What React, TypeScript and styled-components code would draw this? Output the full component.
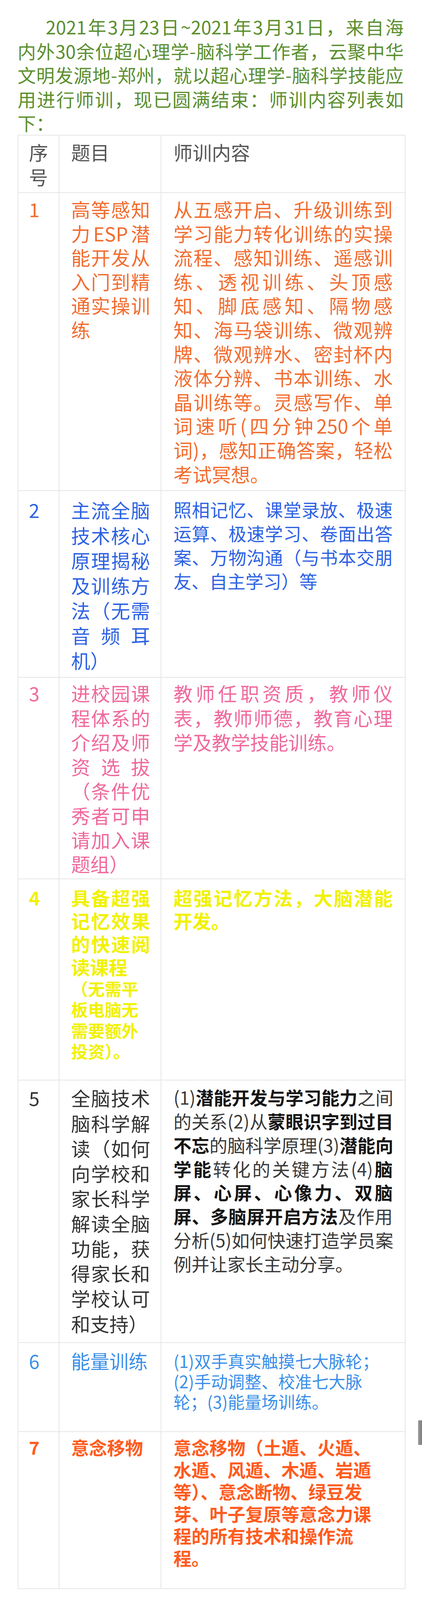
import React from 'react';
import styled, { createGlobalStyle } from 'styled-components';

/* The frame that is photographed is 4096px tall while the reference is 4855px:
   every vertical measure taken from the reference is mapped with K. */
const K = 4096 / 4855;
const vy = (n: number) => `${(n * K).toFixed(2)}px`;

const GlobalStyle = createGlobalStyle`
  html, body { margin: 0; padding: 0; background: #ffffff; }
  body { font-family: "Noto Sans CJK SC", "Noto Sans", sans-serif; }
`;

const Page = styled.main`
  position: relative;
  width: 1080px;
  box-sizing: border-box;
  padding: ${vy(44)} 44px ${vy(30)} 45px;
  background: #ffffff;
`;

const Intro = styled.section`
  width: 988px;
  color: #5b8f2f;
  font-size: 47px;
  line-height: ${vy(73)};
`;

const Line = styled.span<{ $full?: boolean; $indent?: number }>`
  display: block;
  white-space: pre;
  text-align: ${(p) => (p.$full ? 'justify' : 'left')};
  text-align-last: ${(p) => (p.$full ? 'justify' : 'left')};
  text-indent: ${(p) => p.$indent ?? 0}px;
`;

const Table = styled.table`
  width: 991px;
  border-collapse: collapse;
  table-layout: fixed;
  border: 2px solid #e6e6e6;
`;

const Col = styled.col<{ $w: number }>`
  width: ${(p) => p.$w}px;
`;

const Row = styled.tr<{ $h: number }>`
  height: ${(p) => vy(p.$h)};
`;

const Cell = styled.td<{ $padTop: number; $padLeft: number; $padRight: number }>`
  vertical-align: top;
  box-sizing: border-box;
  padding: ${(p) => vy(p.$padTop)} ${(p) => p.$padRight}px 0 ${(p) => p.$padLeft}px;
  border: 2px solid #e6e6e6;
`;

const Text = styled.div<{ $color: string; $size: number; $lh: number; $bold?: boolean }>`
  color: ${(p) => p.$color};
  font-size: ${(p) => p.$size}px;
  line-height: ${(p) => vy(p.$lh)};
  font-weight: ${(p) => (p.$bold ? 700 : 400)};
`;

const Strong = styled.b<{ $color: string }>`
  font-weight: 700;
  color: ${(p) => p.$color};
`;

const ScrollThumb = styled.div`
  position: absolute;
  left: 1070px;
  top: ${vy(4310)};
  width: 10px;
  height: ${vy(74)};
  border-radius: 2px;
  background: linear-gradient(90deg, #9a9a9a, #7d7d7d);
`;

type Seg = string | { b: string };
type L = { segs: Seg[]; full?: boolean };
type Block = { lines: L[]; size: number; lh: number; color?: string };

const full = (...s: string[]): L[] => s.map((t) => ({ segs: [t], full: true }));
const last = (t: string): L => ({ segs: [t] });
const plain = (...s: string[]): L[] => s.map((t) => ({ segs: [t] }));

type RowData = {
  no: string;
  color: string;
  bold?: boolean;
  height: number;
  padTop: number;
  title: Block[];
  content: Block[];
  boldColor?: string;
};

const header: RowData = {
  no: '',
  color: '#555555',
  height: 174,
  padTop: 12,
  title: [{ lines: plain('题目'), size: 49, lh: 75 }],
  content: [{ lines: plain('师训内容'), size: 49, lh: 75 }],
};

const rows: RowData[] = [
  {
    no: '1',
    color: '#f26c2f',
    height: 905,
    padTop: 12,
    title: [
      {
        lines: [...full('高等感知', '力ESP潜', '能开发从', '入门到精', '通实操训'), last('练')],
        size: 49,
        lh: 73,
      },
    ],
    content: [
      {
        lines: [
          ...full(
            '从五感开启、升级训练到',
            '学习能力转化训练的实操',
            '流程、感知训练、遥感训',
            '练、透视训练、头顶感',
            '知、脚底感知、隔物感',
            '知、海马袋训练、微观辨',
            '牌、微观辨水、密封杯内',
            '液体分辨、书本训练、水',
            '晶训练等。灵感写作、单',
            '词速听(四分钟250个单',
            '词)，感知正确答案，轻松'
          ),
          last('考试冥想。'),
        ],
        size: 49,
        lh: 73,
      },
    ],
  },
  {
    no: '2',
    color: '#2d62e3',
    height: 566,
    padTop: 19,
    title: [
      {
        lines: [...full('主流全脑', '技术核心', '原理揭秘', '及训练方', '法（无需', '音频耳'), last('机）')],
        size: 49,
        lh: 76,
      },
    ],
    content: [
      {
        lines: [
          ...full('照相记忆、课堂录放、极速', '运算、极速学习、卷面出答', '案、万物沟通（与书本交朋'),
          last('友、自主学习）等'),
        ],
        size: 46,
        lh: 72,
      },
    ],
  },
  {
    no: '3',
    color: '#f0699c',
    height: 612,
    padTop: 10,
    title: [
      {
        lines: [
          ...full('进校园课', '程体系的', '介绍及师', '资选拔', '（条件优', '秀者可申', '请加入课'),
          last('题组）'),
        ],
        size: 49,
        lh: 74,
      },
    ],
    content: [
      {
        lines: [...full('教师任职资质，教师仪', '表，教师师德，教育心理'), last('学及教学技能训练。')],
        size: 49,
        lh: 74,
      },
    ],
  },
  {
    no: '4',
    color: '#f1f100',
    bold: true,
    height: 610,
    padTop: 20,
    title: [
      { lines: [...full('具备超强', '记忆效果', '的快速阅'), last('读课程')], size: 48, lh: 70 },
      { lines: plain('（无需平', '板电脑无', '需要额外', '投资）。'), size: 43, lh: 63 },
    ],
    content: [{ lines: [...full('超强记忆方法，大脑潜能'), last('开发。')], size: 48, lh: 70 }],
  },
  {
    no: '5',
    color: '#333333',
    boldColor: '#151515',
    height: 797,
    padTop: 15,
    title: [
      {
        lines: [
          ...full('全脑技术', '脑科学解', '读（如何', '向学校和', '家长科学', '解读全脑', '功能，获', '得家长和', '学校认可'),
          last('和支持）'),
        ],
        size: 49,
        lh: 76,
      },
    ],
    content: [
      {
        lines: [
          { segs: ['(1)', { b: '潜能开发与学习能力' }, '之间'], full: true },
          { segs: ['的关系(2)从', { b: '蒙眼识字到过目' }], full: true },
          { segs: [{ b: '不忘' }, '的脑科学原理(3)', { b: '潜能向' }], full: true },
          { segs: [{ b: '学能' }, '转化的关键方法(4)', { b: '脑' }], full: true },
          { segs: [{ b: '屏、心屏、心像力、双脑' }], full: true },
          { segs: [{ b: '屏、多脑屏开启方法' }, '及作用'], full: true },
          { segs: ['分析(5)如何快速打造学员案'], full: true },
          { segs: ['例并让家长主动分享。'] },
        ],
        size: 46,
        lh: 72,
        color: '#3a3a3a',
      },
    ],
  },
  {
    no: '6',
    color: '#3b8fe8',
    height: 270,
    padTop: 22,
    title: [{ lines: plain('能量训练'), size: 49, lh: 62 }],
    content: [
      {
        lines: plain('(1)双手真实触摸七大脉轮；', '(2)手动调整、校准七大脉', '轮；(3)能量场训练。'),
        size: 43,
        lh: 62,
      },
    ],
  },
  {
    no: '7',
    color: '#ff5c1f',
    bold: true,
    height: 476,
    padTop: 12,
    title: [{ lines: plain('意念移物'), size: 46, lh: 67 }],
    content: [
      {
        lines: plain(
          '意念移物（土遁、火遁、',
          '水遁、风遁、木遁、岩遁',
          '等）、意念断物、绿豆发',
          '芽、叶子复原等意念力课',
          '程的所有技术和操作流',
          '程。'
        ),
        size: 46,
        lh: 67,
      },
    ],
  },
];

const renderBlocks = (blocks: Block[], row: RowData) =>
  blocks.map((blk, bi) => (
    <Text key={bi} $color={blk.color ?? row.color} $size={blk.size} $lh={blk.lh} $bold={row.bold}>
      {blk.lines.map((ln, li) => (
        <Line key={li} $full={ln.full}>
          {ln.segs.map((s, si) =>
            typeof s === 'string' ? (
              <React.Fragment key={si}>{s}</React.Fragment>
            ) : (
              <Strong key={si} $color={row.boldColor ?? row.color}>
                {s.b}
              </Strong>
            )
          )}
        </Line>
      ))}
    </Text>
  ));

const TableRow: React.FC<{ row: RowData; noLines?: string[] }> = ({ row, noLines }) => {
  const first = row.title[0];
  return (
    <Row $h={row.height}>
      <Cell $padTop={row.padTop} $padLeft={27} $padRight={20}>
        <Text $color={row.color} $size={first.size} $lh={first.lh} $bold={row.bold}>
          {(noLines ?? [row.no]).map((n, i) => (
            <Line key={i}>{n}</Line>
          ))}
        </Text>
      </Cell>
      <Cell $padTop={row.padTop} $padLeft={30} $padRight={27}>
        {renderBlocks(row.title, row)}
      </Cell>
      <Cell $padTop={row.padTop} $padLeft={31} $padRight={31}>
        {renderBlocks(row.content, row)}
      </Cell>
    </Row>
  );
};

export default function App() {
  return (
    <>
      <GlobalStyle />
      <Page>
        <Intro>
          <Line $full $indent={72}>2021年3月23日~2021年3月31日，来自海</Line>
          <Line $full>内外30余位超心理学-脑科学工作者，云聚中华</Line>
          <Line $full>文明发源地-郑州，就以超心理学-脑科学技能应</Line>
          <Line $full>用进行师训，现已圆满结束：师训内容列表如</Line>
          <Line>下：</Line>
        </Intro>
        <Table>
          <colgroup>
            <Col $w={105} />
            <Col $w={261} />
            <Col $w={625} />
          </colgroup>
          <tbody>
            <TableRow row={header} noLines={['序', '号']} />
            {rows.map((r) => (
              <TableRow key={r.no} row={r} />
            ))}
          </tbody>
        </Table>
        <ScrollThumb />
      </Page>
    </>
  );
}
